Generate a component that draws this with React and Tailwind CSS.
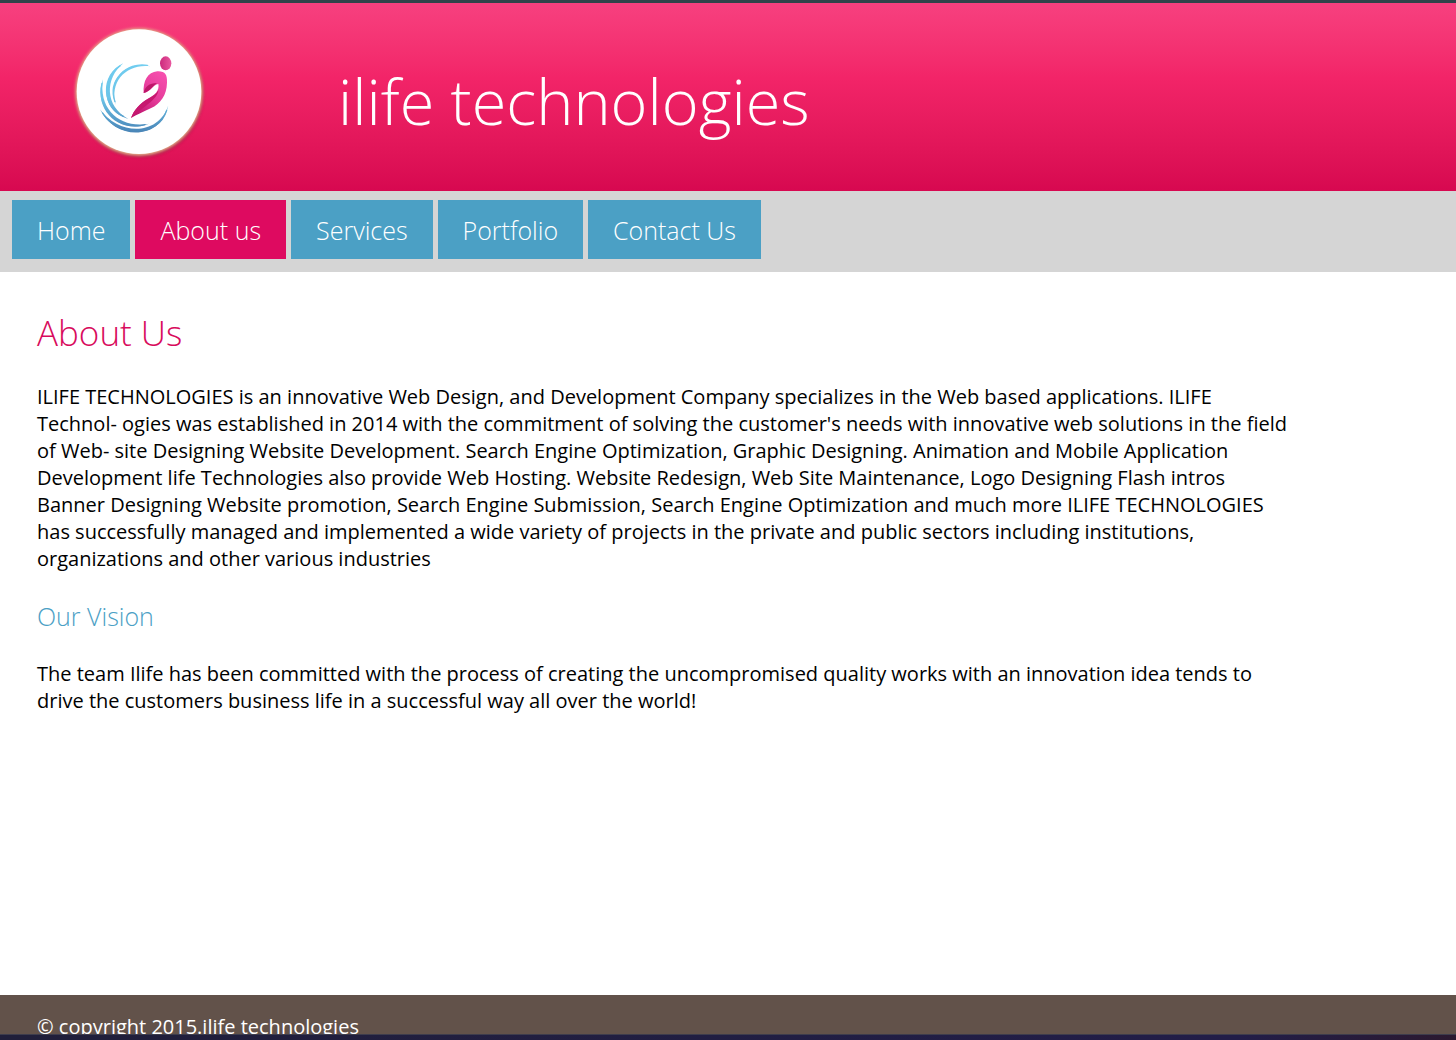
function Logo() {
  return (
    <svg viewBox="0 0 480 465" className="h-[155px] w-[160px]" role="img" aria-label="ilife logo">
      <defs>
        <filter id="soft" x="-10%" y="-10%" width="120%" height="120%">
          <feGaussianBlur stdDeviation="4" />
        </filter>
        <linearGradient id="swirl" gradientUnits="userSpaceOnUse" x1="0" y1="145" x2="0" y2="350">
          <stop offset="0" stopColor="#70cdf0" />
          <stop offset="0.5" stopColor="#6cc4e8" />
          <stop offset="1" stopColor="#4a86b8" />
        </linearGradient>
        <linearGradient id="figure" x1="0.8" y1="0" x2="0.2" y2="1">
          <stop offset="0" stopColor="#f64fae" />
          <stop offset="0.5" stopColor="#e43a98" />
          <stop offset="1" stopColor="#bd126c" />
        </linearGradient>
        <linearGradient id="head" x1="0" y1="0" x2="1" y2="0">
          <stop offset="0" stopColor="#cc2a7d" />
          <stop offset="1" stopColor="#e9579f" />
        </linearGradient>
      </defs>
      <circle cx="240" cy="237" r="190" fill="#8a1638" opacity="0.55" filter="url(#soft)" />
      <circle cx="237" cy="231" r="191" fill="#e5b58c" filter="url(#soft)" />
      <circle cx="237" cy="230" r="187" fill="#fff" />
      <g fill="url(#swirl)">
        <path d="M272 154C200 134 136 196 168 270C146 196 204 144 272 154Z" />
        <path d="M190 145C118 176 118 286 205 312C134 274 134 190 190 145Z" />
        <path d="M129 193C96 280 176 362 267 326C184 342 114 286 129 193Z" />
        <path d="M120 283C164 378 304 378 325 271C294 366 174 360 120 283Z" />
      </g>
      <g fill="none" stroke="url(#swirl)" strokeWidth="4" strokeLinecap="round">
        <path d="M262 151C200 140 142 196 165 260" />
        <path d="M180 153C126 188 126 280 190 304" />
        <path d="M126 205C108 280 178 350 255 329" />
        <path d="M128 294C172 368 294 370 320 286" />
      </g>
      <ellipse cx="317" cy="145" rx="17" ry="21" fill="url(#head)" />
      <path
        d="M251 234C248 199 263 171 292 169C315 168 322 178 321 203C320 240 303 265 272 280C250 290 230 300 213 309C221 285 240 265 264 251C285 241 299 226 295 207C279 209 273 230 251 234Z"
        fill="url(#figure)"
      />
      <path d="M251 234C254 216 267 204 292 204C278 211 272 229 251 234Z" fill="#bd1769" />
      <path d="M213 309C222 285 241 264 264 251C279 244 290 236 295 226C294 253 247 278 213 309Z" fill="#c6186f" />
    </svg>
  );
}

const links = ["Home", "About us", "Services", "Portfolio", "Contact Us"];

export default function App() {
  return (
    <div className="flex min-h-screen flex-col bg-white font-['Open_Sans',sans-serif] text-xl leading-[27px] text-black">
      <div className="h-[3px] bg-[#31434a]" />
      <header className="flex h-[188px] items-start bg-linear-to-b from-[#f7407f] via-[#f22468] via-40% to-[#d70850] pt-3 pl-[60px]">
        <Logo />
        <p className="mt-[42px] ml-[118px] text-[63px] leading-[88px] font-light text-white">ilife technologies</p>
      </header>
      <nav aria-label="Main" className="bg-[#d5d5d5] px-3 pt-[9px] pb-[13px]">
        <ul className="flex flex-wrap gap-[5px]">
          {links.map((label) => (
            <li key={label}>
              <a
                href="#"
                aria-current={label === "About us" ? "page" : undefined}
                className="block bg-[#4ba0c5] px-[25px] pt-[13px] pb-3 text-[25px] leading-[34px] font-light text-white aria-[current=page]:bg-[#de0a60]"
              >
                {label}
              </a>
            </li>
          ))}
        </ul>
      </nav>
      <main className="flex-1 pt-[37px] pr-[168px] pl-[37px]">
        <h1 className="text-[35px] leading-[48px] font-light text-[#d80b5c]">About Us</h1>
        <p className="mt-[26px]">
          ILIFE TECHNOLOGIES is an innovative Web Design, and Development Company specializes in the Web based
          applications. ILIFE Technol- ogies was established in 2014 with the commitment of solving the customer's
          needs with innovative web solutions in the field of Web- site Designing Website Development. Search Engine
          Optimization, Graphic Designing. Animation and Mobile Application Development life Technologies also provide
          Web Hosting. Website Redesign, Web Site Maintenance, Logo Designing Flash intros Banner Designing Website
          promotion, Search Engine Submission, Search Engine Optimization and much more ILIFE TECHNOLOGIES has
          successfully managed and implemented a wide variety of projects in the private and public sectors including
          institutions, organizations and other various industries
        </p>
        <h2 className="mt-[27px] text-[25px] leading-[34px] font-light text-[#4ba0c5]">Our Vision</h2>
        <p className="mt-[27px]">
          The team Ilife has been committed with the process of creating the uncompromised quality works with an
          innovation idea tends to drive the customers business life in a successful way all over the world!
        </p>
      </main>
      <footer className="h-[39px] overflow-hidden bg-[#62524a] pt-[18px] pl-[37px] text-white">
        <p>© copyright 2015.ilife technologies</p>
      </footer>
      <div className="h-[6px] border-t border-[#3d3c4c] bg-linear-to-r from-[#201f3a] via-[#211d48] via-85% to-[#2b1930]" />
    </div>
  );
}
